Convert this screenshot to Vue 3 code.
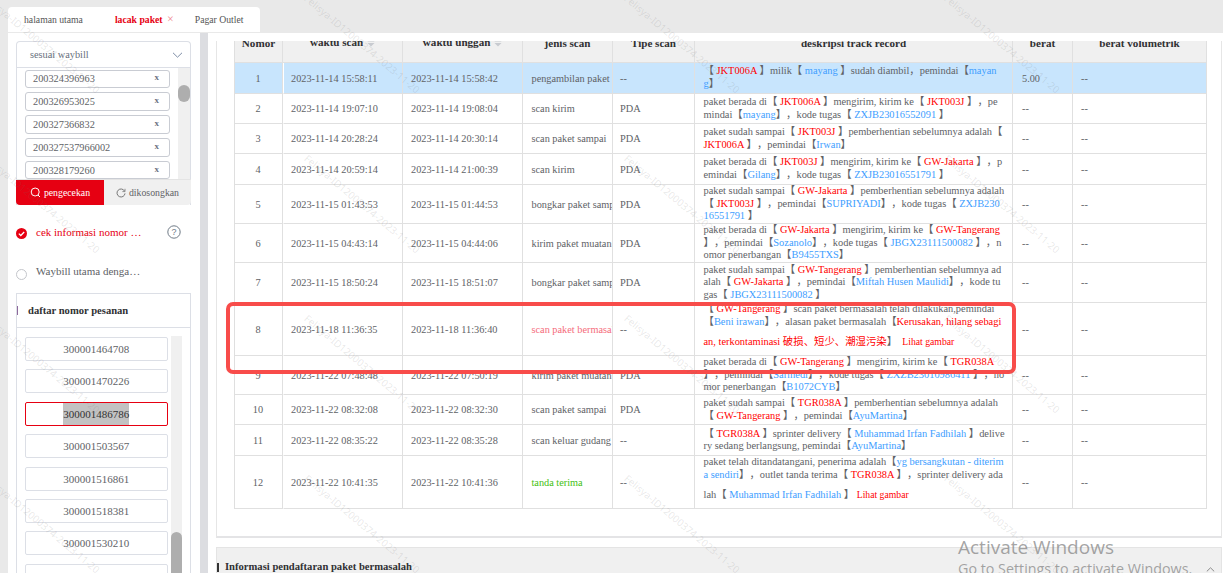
<script setup>
// [x] = red value, {x} = blue value, (x) = image link in the track record lines
const parseLine = (line) =>
  line.split(/(\[[^\]]*\]|\{[^}]*\}|\([^)]*\))/).filter(Boolean).map((part) => {
    if (part[0] === '[') return { text: part.slice(1, -1), cls: 'red' }
    if (part[0] === '{') return { text: part.slice(1, -1), cls: 'blue' }
    if (part[0] === '(') return { text: part.slice(1, -1), cls: 'red pic-link' }
    return { text: part, cls: '' }
  })

const waybills = ['200324396963', '200326953025', '200327366832', '200327537966002', '200328179260']
const orders = ['300001464708', '300001470226', '300001486786', '300001503567', '300001516861', '300001518381', '300001530210', '300001536100']

const rawRows = [
  { h: 31, scan: '2023-11-14 15:58:11', up: '2023-11-14 15:58:42', kind: 'pengambilan paket', type: '--', weight: '5.00', lines: ['【 [JKT006A] 】milik【 {mayang} 】sudah diambil，pemindai【{mayan}', '{g}】'] },
  { h: 30, scan: '2023-11-14 19:07:10', up: '2023-11-14 19:08:04', kind: 'scan kirim', type: 'PDA', lines: ['paket berada di【 [JKT006A] 】mengirim, kirim ke【 [JKT003J] 】，pe', 'mindai【{mayang}】，kode tugas【 {ZXJB23016552091} 】'] },
  { h: 30, scan: '2023-11-14 20:28:24', up: '2023-11-14 20:30:14', kind: 'scan paket sampai', type: 'PDA', lines: ['paket sudah sampai【 [JKT003J] 】pemberhentian sebelumnya adalah【', '[JKT006A] 】，pemindai【{Irwan}】'] },
  { h: 31, scan: '2023-11-14 20:59:14', up: '2023-11-14 21:00:39', kind: 'scan kirim', type: 'PDA', lines: ['paket berada di【 [JKT003J] 】mengirim, kirim ke【 [GW-Jakarta] 】，p', 'emindai【{Gilang}】，kode tugas【 {ZXJB23016551791} 】'] },
  { h: 39, scan: '2023-11-15 01:43:53', up: '2023-11-15 01:44:53', kind: 'bongkar paket sampai', type: 'PDA', lines: ['paket sudah sampai【 [GW-Jakarta] 】pemberhentian sebelumnya adalah', '【 [JKT003J] 】，pemindai【{SUPRIYADI}】，kode tugas【 {ZXJB230}', '{16551791} 】'] },
  { h: 39, scan: '2023-11-15 04:43:14', up: '2023-11-15 04:44:06', kind: 'kirim paket muatan', type: 'PDA', lines: ['paket berada di【 [GW-Jakarta] 】mengirim, kirim ke【 [GW-Tangerang]', '】，pemindai【{Sozanolo}】，kode tugas【 {JBGX23111500082} 】，n', 'omor penerbangan【{B9455TXS}】'] },
  { h: 40, scan: '2023-11-15 18:50:24', up: '2023-11-15 18:51:07', kind: 'bongkar paket sampai', type: 'PDA', lines: ['paket sudah sampai【 [GW-Tangerang] 】pemberhentian sebelumnya ad', 'alah【 [GW-Jakarta] 】，pemindai【{Miftah Husen Maulidi}】，kode tu', 'gas【 {JBGX23111500082} 】'] },
  { h: 53, scan: '2023-11-18 11:36:35', up: '2023-11-18 11:36:40', kind: 'scan paket bermasalah', kindCls: 'pink', type: '--', tall: true, lines: ['【 [GW-Tangerang] 】scan paket bermasalah telah dilakukan,pemindai', '【{Beni irawan}】，alasan paket bermasalah【[Kerusakan, hilang sebagi]', '[an, terkontaminasi 破损、短少、潮湿污染]】  (Lihat gambar)'] },
  { h: 39, scan: '2023-11-22 07:48:48', up: '2023-11-22 07:50:19', kind: 'kirim paket muatan', type: 'PDA', lines: ['paket berada di【 [GW-Tangerang] 】mengirim, kirim ke【 [TGR038A]', '】，pemindai【{Sarmedi}】，kode tugas【 {ZXZB23010986411} 】，no', 'mor penerbangan【{B1072CYB}】'] },
  { h: 30, scan: '2023-11-22 08:32:08', up: '2023-11-22 08:32:30', kind: 'scan paket sampai', type: 'PDA', lines: ['paket sudah sampai【 [TGR038A] 】pemberhentian sebelumnya adalah', '【 [GW-Tangerang] 】，pemindai【{AyuMartina}】'] },
  { h: 31, scan: '2023-11-22 08:35:22', up: '2023-11-22 08:35:28', kind: 'scan keluar gudang', type: '--', lines: ['【 [TGR038A] 】sprinter delivery【 {Muhammad Irfan Fadhilah} 】delive', 'ry sedang berlangsung, pemindai【{AyuMartina}】'] },
  { h: 52, scan: '2023-11-22 10:41:35', up: '2023-11-22 10:41:36', kind: 'tanda terima', kindCls: 'green', type: '--', tall: true, lines: ['paket telah ditandatangani, penerima adalah【{yg bersangkutan - diterim}', '{a sendiri}】，outlet tanda terima【 [TGR038A] 】，sprinter delivery ada', 'lah【 {Muhammad Irfan Fadhilah} 】 (Lihat gambar)'] }
]

const rows = rawRows.map((row, i) => ({
  ...row,
  no: i + 1,
  parsed: row.lines.map(parseLine)
}))

// watermark tiles, one every 320 x 160
const marks = Array.from({ length: 16 }, (_, i) => i)
</script>

<template>
  <div class="page">
    <nav class="tabs">
      <span class="tab tab-first">halaman utama</span>
      <span class="tab tab-active">lacak paket <i class="close">×</i></span>
      <span class="tab">Pagar Outlet</span>
    </nav>

    <div class="content">
      <aside class="side">
        <div class="search-box">
          <div class="select-head">
            <span>sesuai waybill</span>
            <svg width="11" height="6" viewBox="0 0 11 6"><path d="M1 .8l4.5 4.4L10 .8" fill="none" stroke="#7d8da6" stroke-width="1"/></svg>
          </div>
          <div class="waybill-wrap">
            <div class="waybill-list">
              <div v-for="w in waybills" :key="w" class="waybill">
                <span>{{ w }}</span><b>x</b>
              </div>
            </div>
            <div class="bar-small"><div class="thumb-small"></div></div>
          </div>
          <div class="actions">
            <button class="btn btn-red">
              <svg width="11" height="11" viewBox="0 0 11 11"><circle cx="5.2" cy="5" r="4" fill="none" stroke="#fff"/><path d="M8 8l2 2" stroke="#fff"/></svg>
              pengecekan
            </button>
            <button class="btn btn-gray">
              <svg width="10" height="10" viewBox="0 0 10 10"><path d="M8.6 3.2A4 4 0 1 0 9 5.4" fill="none" stroke="#777"/><path d="M9 .8v2.8H6.4" fill="none" stroke="#777" stroke-width=".8"/></svg>
              dikosongkan
            </button>
          </div>
        </div>

        <div class="radio-row radio-on">
          <svg width="11" height="11" viewBox="0 0 11 11"><circle cx="5.5" cy="5.5" r="5.5" fill="#e60012"/><path d="M2.8 5.6l2 1.9 3.4-3.5" fill="none" stroke="#fff" stroke-width="1.3"/></svg>
          <span class="radio-label">cek informasi nomor …</span>
          <svg class="help" width="14" height="14" viewBox="0 0 14 14"><circle cx="7" cy="7" r="6.2" fill="none" stroke="#6f7a86"/><text x="7" y="10.2" text-anchor="middle" font-size="9" fill="#6f7a86" font-family="Liberation Sans">?</text></svg>
        </div>
        <div class="radio-row radio-off">
          <span class="radio-dot"></span>
          <span class="radio-label">Waybill utama denga…</span>
        </div>

        <div class="order-box">
          <div class="order-head"><i class="order-mark"></i>daftar nomor pesanan</div>
          <div class="order-body">
            <div class="order-list">
              <div v-for="o in orders" :key="o" class="order" :class="{ 'order-on': o === '300001486786' }">
                <span>{{ o }}</span>
              </div>
            </div>
            <div class="bar-big"><div class="thumb-big"></div></div>
          </div>
        </div>
      </aside>

      <div class="divider"></div>

      <main class="main">
        <section class="card">
          <table class="track">
            <colgroup>
              <col style="width:48px"><col style="width:120px"><col style="width:120px"><col style="width:90px">
              <col style="width:82px"><col style="width:318px"><col style="width:60px"><col style="width:134px">
            </colgroup>
            <thead>
              <tr>
                <th>Nomor</th>
                <th><span class="sort-head">waktu scan <svg width="8" height="9" viewBox="0 0 8 9"><path d="M4 0l3.5 3.4h-7zM.5 5h7L4 8.5z" fill="#c8cbd0"/></svg></span></th>
                <th><span class="sort-head">waktu unggan <svg width="8" height="9" viewBox="0 0 8 9"><path d="M4 0l3.5 3.4h-7zM.5 5h7L4 8.5z" fill="#c8cbd0"/></svg></span></th>
                <th>jenis scan</th>
                <th>Tipe scan</th>
                <th>deskripsi track record</th>
                <th>berat</th>
                <th>berat volumetrik</th>
              </tr>
            </thead>
            <tbody>
              <tr v-for="row in rows" :key="row.no" :class="{ picked: row.no === 1 }" :style="{ height: row.h + 'px' }">
                <td class="c-no">{{ row.no }}</td>
                <td class="c-scan">{{ row.scan }}</td>
                <td>{{ row.up }}</td>
                <td class="c-kind" :class="row.kindCls">{{ row.kind }}</td>
                <td class="c-type">{{ row.type }}</td>
                <td class="c-desc">
                  <div v-for="(line, i) in row.parsed" :key="i" class="line" :class="{ 'line-tall': row.tall && i === 2 }">
                    <span v-for="(seg, j) in line" :key="j" :class="seg.cls">{{ seg.text }}</span>
                  </div>
                </td>
                <td class="c-weight">{{ row.weight || '--' }}</td>
                <td>--</td>
              </tr>
            </tbody>
          </table>
        </section>
        <section class="card-next">
          <i class="next-mark"></i>Informasi pendaftaran paket bermasalah
        </section>
      </main>
    </div>

    <div class="red-box"></div>

    <div class="watermarks">
      <div v-for="m in marks" :key="m" class="mark-cell"><span>Felisya-ID12000374-2023-11-20</span></div>
    </div>

    <div class="activate">
      <div class="activate-big">Activate Windows</div>
      <div class="activate-small">Go to Settings to activate Windows.</div>
    </div>
    <svg class="tray-arrow" width="9" height="5" viewBox="0 0 9 5"><path d="M.8 4.4L4.5.8l3.7 3.6" fill="none" stroke="#8a8a8a"/></svg>
  </div>
</template>

<style scoped>
.page {
  position: relative;
  height: 573px;
  overflow: hidden;
  padding: 7px 0 0 8px;
  box-sizing: border-box;
  background: #e9e9e9;
  font-family: "Liberation Serif", "Noto Sans CJK SC", serif;
  font-size: 10.3px;
  color: #606266;
  display: flex;
  flex-direction: column;
  text-spacing-trim: space-all;
}

/* tabs */
.tabs {
  width: 252px;
  height: 25px;
  flex: none;
  box-sizing: border-box;
  background: #fff;
  border-radius: 4px 4px 0 0;
  display: flex;
  align-items: center;
  font-size: 9.7px;
  color: #555;
}
.tab-first { margin-left: 16px; }
.tab-active { margin-left: 32px; color: #e60012; font-weight: bold; }
.tab-active .close { font-style: normal; font-weight: normal; margin-left: 2px; color: #f08a92; font-size: 12px; }
.tab-active + .tab { margin-left: 21px; }

.content {
  flex: 1;
  display: flex;
  min-height: 0;
  margin-top: 1px;
  background: #fff;
}

/* left column */
.side {
  width: 192px;
  flex: none;
  box-sizing: border-box;
  padding: 8px 9px 0 8px;
  background: #fff;
}
.search-box {
  border: 1px solid #dcdfe6;
  border-bottom: none;
  border-radius: 4px 4px 0 0;
  margin-bottom: 0;
}
.select-head {
  height: 25px;
  padding: 0 7px 0 13px;
  border-bottom: 1px solid #dcdfe6;
  display: flex;
  align-items: center;
  justify-content: space-between;
  font-size: 10.3px;
  color: #67707d;
}
.waybill-wrap {
  display: flex;
  height: 111px;
}
.waybill-list {
  flex: 1;
  overflow: hidden;
  padding: 1.5px 8px 0;
  display: flex;
  flex-direction: column;
  gap: 4px;
}
.waybill {
  flex: none;
  height: 18.8px;
  box-sizing: border-box;
  border: 1px solid #c9ccd3;
  border-radius: 3px;
  padding: 0 10px 0 7px;
  display: flex;
  align-items: center;
  justify-content: space-between;
  font-size: 10.3px;
}
.waybill b { font-size: 9px; color: #6b7280; margin-top: -3px; }
.bar-small {
  width: 12px;
  background: #f0f0f0;
  padding-top: 17px;
  box-sizing: border-box;
}
.thumb-small {
  height: 17px;
  border-radius: 6px;
  background: #aeaeae;
}
.actions {
  display: flex;
  height: 26px;
  margin: 0 -1px;
  border-top: 1px solid #e4e4e4;
  box-sizing: border-box;
}
.btn {
  border: none;
  font-family: inherit;
  font-size: 9.8px;
  padding: 0;
  display: flex;
  align-items: center;
  justify-content: center;
  gap: 3px;
}
.btn-red {
  width: 88px;
  background: #e60012;
  color: #fff;
  border-radius: 0 0 0 4px;
}
.btn-gray {
  flex: 1;
  background: #f0f0f0;
  color: #606266;
  border-radius: 0 0 4px 0;
}

.radio-row {
  display: flex;
  align-items: center;
  position: relative;
  font-size: 11px;
}
.radio-on { margin-top: 20px; height: 14px; color: #e60012; }
.radio-off { margin-top: 26px; height: 14px; }
.radio-label { margin-left: 9px; }
.help { margin-left: auto; margin-right: 10px; }
.radio-dot {
  width: 11px;
  height: 11px;
  box-sizing: border-box;
  border: 1px solid #c4c6cb;
  border-radius: 50%;
  flex: none;
  margin-top: 5px;
}
.radio-on svg:first-child { margin-top: 2px; }
.radio-off .radio-label { margin-top: -2px; }

.order-box {
  margin-top: 14px;
  border: 1px solid #dcdfe6;
  border-bottom: none;
  height: 300px;
}
.order-head {
  height: 33px;
  border-bottom: 1px solid #dcdfe6;
  display: flex;
  align-items: center;
  font-size: 10.6px;
  font-weight: bold;
  color: #303133;
}
.order-mark {
  width: 1px;
  height: 9px;
  background: #8e6a9c;
  margin-right: 10px;
}
.order-body {
  display: flex;
  padding: 8px 8px 0 8px;
}
.order-list {
  flex: none;
  width: 142.5px;
  height: 237px;
  overflow: hidden;
  padding-top: 1px;
  display: flex;
  flex-direction: column;
  gap: 8.4px;
}
.order {
  flex: none;
  height: 24px;
  box-sizing: border-box;
  border: 1px solid #dcdfe6;
  border-radius: 2px;
  display: flex;
  align-items: center;
  justify-content: center;
  font-size: 11px;
}
.order-on {
  border-color: #e60012;
  color: #333;
}
.order-on span {
  background: #c2c2c2;
  line-height: 22px;
}
.bar-big {
  width: 12px;
  margin-left: 3.5px;
  background: #f0f0f0;
  padding-top: 196px;
  box-sizing: border-box;
}
.thumb-big {
  height: 60px;
  border-radius: 6px 6px 0 0;
  background: #aeaeae;
}

.divider {
  width: 8px;
  flex: none;
  background: #dcdde1;
}

/* right column */
.main {
  flex: 1;
  min-width: 0;
  padding: 8px 1px 0 8px;
}
.card {
  height: 497px;
  box-sizing: border-box;
  border: 1px solid #e6e6e6;
  border-top: none;
  border-bottom: 2px solid #e4e4e6;
  padding-left: 17px;
  overflow: hidden;
}
.track {
  table-layout: fixed;
  width: 972px;
  border-collapse: separate;
  border-spacing: 0;
  margin-top: -6px;
  border-left: 1px solid #dfdfdf;
  box-sizing: border-box;
}
.track th {
  height: 28px;
  box-sizing: border-box;
  padding: 0;
  line-height: 16px;
  vertical-align: top;
  background: #f0f0f0;
  font-size: 11.1px;
  font-weight: bold;
  color: #303133;
  text-align: center;
  border-right: 1px solid #e0e0e0;
  border-bottom: 1px solid #e0e0e0;
}
.sort-head { position: relative; top: -1px; }
.sort-head svg { margin-left: 1px; vertical-align: -1px; }
.track td {
  padding: 0 0 0 8px;
  box-sizing: border-box;
  overflow: hidden;
  white-space: nowrap;
  vertical-align: middle;
  border-right: 1px solid #e0e0e0;
  border-bottom: 1px solid #e0e0e0;
}
.track td:nth-child(2) { border-left: 1px solid #fff; }
.track td.c-no { padding: 0 1px 0 0; text-align: center; }
.track td.c-scan { padding-left: 7px; }
.track td.c-kind { padding-left: 8.5px; }
.track td.c-type { padding-left: 7px; }
.track td.c-desc { padding-left: 8.5px; font-size: 10.4px; }
.track td.c-weight { padding-left: 9px; }
.track tr.picked td { background: #c8e5fd; }
.line {
  line-height: 12.6px;
  height: 12.6px;
  white-space: pre;
}
.line-tall {
  line-height: 27px;
  height: 27px;
}
.red { color: #f00; }
.blue { color: #409eff; }
.pink { color: #f56c7c; }
.green { color: #3fbf12; }
.pic-link { font-size: 9.7px; }

.card-next {
  margin-top: 9px;
  height: 40px;
  box-sizing: border-box;
  background: #f0f0f0;
  border: 1px solid #e4e4e4;
  padding-top: 13px;
  display: flex;
  align-items: flex-start;
  line-height: 12px;
  font-size: 10.6px;
  font-weight: bold;
  color: #303133;
}
.next-mark {
  width: 2px;
  height: 9px;
  background: #333;
  margin: 2px 6px 0 0;
}

/* overlays */
.red-box {
  position: absolute;
  left: 226px;
  top: 302px;
  width: 790px;
  height: 72px;
  box-sizing: border-box;
  border: 4px solid #f84c4a;
  border-radius: 7px;
  pointer-events: none;
}
.watermarks {
  position: absolute;
  left: -10px;
  top: -8px;
  display: grid;
  grid-template-columns: repeat(4, 320px);
  grid-auto-rows: 160px;
  pointer-events: none;
}
.mark-cell span {
  display: block;
  width: 170px;
  transform-origin: 0 0;
  transform: rotate(40deg);
  font-family: "Noto Sans", sans-serif;
  font-size: 10px;
  line-height: 12px;
  white-space: nowrap;
  color: rgba(110, 110, 110, 0.16);
}
.activate {
  position: absolute;
  left: 958px;
  top: 535px;
  font-family: "Open Sans", sans-serif;
  color: rgba(135, 135, 135, 0.75);
  white-space: nowrap;
  pointer-events: none;
}
.activate-big { font-size: 19px; line-height: 24px; }
.activate-small { font-size: 14.3px; line-height: 19px; }
.tray-arrow {
  position: absolute;
  left: 1206px;
  top: 567px;
}
</style>

<style>
html, body { margin: 0; overflow: hidden; }
</style>
